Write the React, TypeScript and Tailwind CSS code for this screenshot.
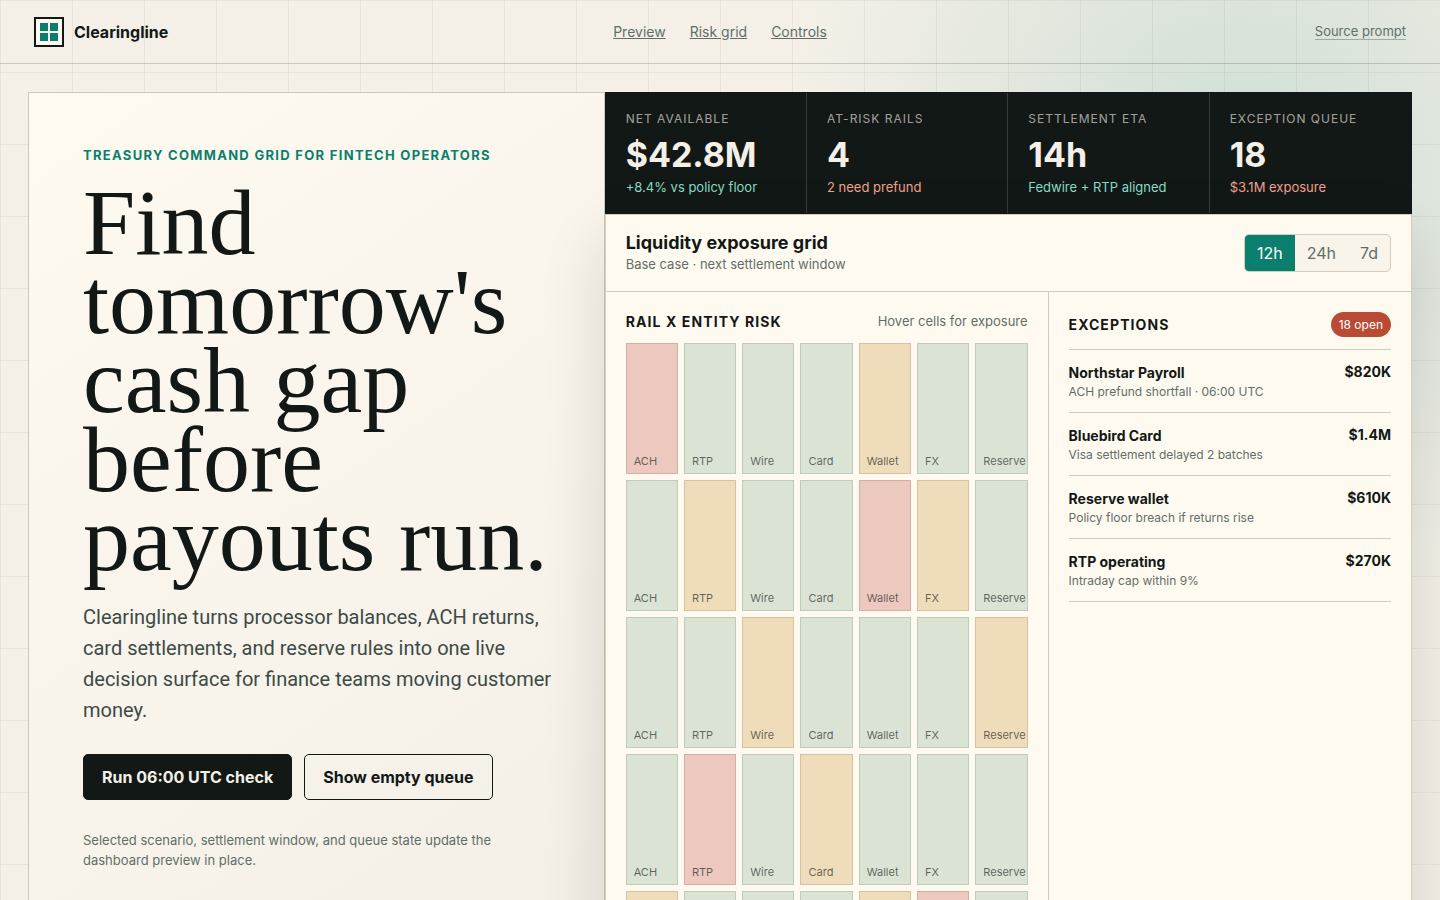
const NAV = ['Preview', 'Risk grid', 'Controls'];

const STATS = [
  { label: 'Net available', value: '$42.8M', note: '+8.4% vs policy floor', good: true },
  { label: 'At-risk rails', value: '4', note: '2 need prefund', good: false },
  { label: 'Settlement ETA', value: '14h', note: 'Fedwire + RTP aligned', good: true },
  { label: 'Exception queue', value: '18', note: '$3.1M exposure', good: false },
];

const WINDOWS = ['12h', '24h', '7d'];

const RAILS = ['ACH', 'RTP', 'Wire', 'Card', 'Wallet', 'FX', 'Reserve'];

// One string per entity: r = risk, w = watch, o = ok
const LEVELS = ['rooowoo', 'owoorwo', 'oowooow', 'orowooo', 'wooowro'];

const TONE: Record<string, string> = {
  r: 'bg-[#edc8be] border-[#d3b0a6]',
  w: 'bg-[#efdcba] border-[#d3c3a2]',
  o: 'bg-[#dae3d4] border-[#bfcbbb]',
};

const EXCEPTIONS = [
  { name: 'Northstar Payroll', detail: 'ACH prefund shortfall · 06:00 UTC', amount: '$820K' },
  { name: 'Bluebird Card', detail: 'Visa settlement delayed 2 batches', amount: '$1.4M' },
  { name: 'Reserve wallet', detail: 'Policy floor breach if returns rise', amount: '$610K' },
  { name: 'RTP operating', detail: 'Intraday cap within 9%', amount: '$270K' },
];

export default function App() {
  return (
    <div className="min-h-screen bg-[#f4f0e8] bg-[radial-gradient(circle_at_86%_170px,rgba(11,127,109,0.16),transparent_460px)] font-[Inter,sans-serif] text-[#121816]">
      <div className="min-h-screen bg-[linear-gradient(rgba(18,24,22,0.055)_1px,transparent_1px),linear-gradient(90deg,rgba(18,24,22,0.055)_1px,transparent_1px)] bg-[size:72px_72px]">
        <Header />
        <main className="grid grid-cols-[5fr_7fr] p-7">
          <Hero />
          <Dashboard />
        </main>
      </div>
    </div>
  );
}

function Header() {
  return (
    <header className="grid h-16 grid-cols-[1fr_auto_1fr] items-center border-b border-[#121816]/18 px-[34px]">
      <div className="flex items-center gap-2.5">
        <svg viewBox="0 0 30 30" className="size-[30px]" aria-hidden="true">
          <rect x="1" y="1" width="28" height="28" fill="#fffaf0" stroke="#121816" strokeWidth="2" />
          <path d="M6 6h8v8H6zM16 6h8v8h-8zM6 16h8v8H6zM16 16h8v8h-8z" fill="#0b7f6d" />
        </svg>
        <span className="text-base font-bold">Clearingline</span>
      </div>
      <nav className="flex gap-6 text-sm text-[#5f6f68]">
        {NAV.map((item) => (
          <a key={item} href="#" className="underline">
            {item}
          </a>
        ))}
      </nav>
      <a href="#" className="justify-self-end border-b border-[#5f6f68]/50 text-[13px] leading-4 text-[#5f6f68]">
        Source prompt
      </a>
    </header>
  );
}

function Hero() {
  return (
    <section className="border border-[#121816]/18 bg-[linear-gradient(145deg,#fffaf0,#f4f0e8_85%)] bg-clip-padding py-[54px] pr-11 pl-[54px]">
      <p className="text-[13px] leading-4 font-bold tracking-[1.3px] text-[#0b7f6d] uppercase">
        Treasury command grid for fintech operators
      </p>
      <h1 className="mt-5 font-['Liberation_Serif',Georgia,serif] text-[94px] leading-[79px]">
        Find tomorrow's cash gap before payouts run.
      </h1>
      <p className="mt-6 font-[Roboto,sans-serif] text-xl leading-[31px] text-[#3d4a45]">
        Clearingline turns processor balances, ACH returns, card settlements, and reserve rules into one live decision
        surface for finance teams moving customer money.
      </p>
      <div className="mt-7 flex gap-3">
        <button type="button" className="h-[46px] rounded-[5px] border border-[#121816] bg-[#121816] px-[18px] font-bold text-[#f4f0e8]">
          Run 06:00 UTC check
        </button>
        <button type="button" className="h-[46px] rounded-[5px] border border-[#121816] px-[18px] font-bold">
          Show empty queue
        </button>
      </div>
      <p className="mt-[30px] max-w-[430px] text-[13px] leading-5 text-[#5f6f68]">
        Selected scenario, settlement window, and queue state update the dashboard preview in place.
      </p>
    </section>
  );
}

function Dashboard() {
  return (
    <section className="flex flex-col">
      <div className="grid grid-cols-4 border border-[#121816] bg-[#121816]">
        {STATS.map((stat) => (
          <div key={stat.label} className="border-r border-white/16 px-5 py-[18px] last:border-r-0">
            <p className="text-xs leading-4 tracking-[1px] text-[#f4f0e8]/65 uppercase">{stat.label}</p>
            <p className="mt-2 text-[34px] leading-[40px] font-bold text-[#f4f0e8]">{stat.value}</p>
            <p className={`mt-1 text-[13px] leading-4 ${stat.good ? 'text-[#85dcc4]' : 'text-[#f3a18f]'}`}>{stat.note}</p>
          </div>
        ))}
      </div>

      <div className="flex grow flex-col border border-[#d3cdc0] bg-[#fffaf0] shadow-[0_24px_60px_rgba(18,24,22,0.14)]">
        <div className="flex items-center justify-between border-b border-[#d3cdc0] px-5 py-[19px]">
          <div>
            <h2 className="text-lg leading-[18px] font-bold">Liquidity exposure grid</h2>
            <p className="mt-1 text-[13px] leading-4 text-[#5f6f68]">Base case · next settlement window</p>
          </div>
          <div className="flex overflow-hidden rounded-[5px] border border-[#d3cdc0] bg-[#f9f4ea]">
            {WINDOWS.map((w, i) => (
              <button
                key={w}
                type="button"
                aria-pressed={i === 0}
                className={`h-9 px-3 ${i === 0 ? 'bg-[#0b7f6d] text-white' : 'text-[#5f6f68]'}`}
              >
                {w}
              </button>
            ))}
          </div>
        </div>

        <div className="grid grow grid-cols-[11fr_9fr]">
          <RiskGrid />
          <Exceptions />
        </div>
      </div>
    </section>
  );
}

function RiskGrid() {
  return (
    <div className="min-w-0 border-r border-[#d3cdc0] p-5">
      <div className="mb-3 flex items-center justify-between">
        <h3 className="text-sm leading-[19px] font-bold tracking-[1.1px] uppercase">Rail x entity risk</h3>
        <span className="text-[13px] leading-[19px] text-[#5f6f68]">Hover cells for exposure</span>
      </div>
      <div className="grid grid-cols-[repeat(7,minmax(0,1fr))] gap-1.5">
        {LEVELS.map((row, r) =>
          RAILS.map((rail, c) => (
            <div
              key={`${r}-${rail}`}
              className={`flex h-[131px] items-end border px-[7px] pb-1 text-[11px] leading-4 text-[#121816]/65 ${TONE[row[c]]}`}
            >
              {rail}
            </div>
          )),
        )}
      </div>
    </div>
  );
}

function Exceptions() {
  return (
    <div className="p-5">
      <div className="flex items-center justify-between border-b border-[#d3cdc0] pb-3">
        <h3 className="text-sm leading-[19px] font-bold tracking-[1.1px] uppercase">Exceptions</h3>
        <span className="rounded-full bg-[#b94b35] px-2 py-1 text-xs leading-[17px] text-white">18 open</span>
      </div>
      <ul>
        {EXCEPTIONS.map((item) => (
          <li key={item.name} className="flex items-start justify-between border-b border-[#d3cdc0] pt-3.5 pb-2.5">
            <div>
              <p className="text-sm leading-[18px] font-bold">{item.name}</p>
              <p className="text-xs leading-5 text-[#5f6f68]">{item.detail}</p>
            </div>
            <span className="text-sm leading-4 font-bold">{item.amount}</span>
          </li>
        ))}
      </ul>
    </div>
  );
}
